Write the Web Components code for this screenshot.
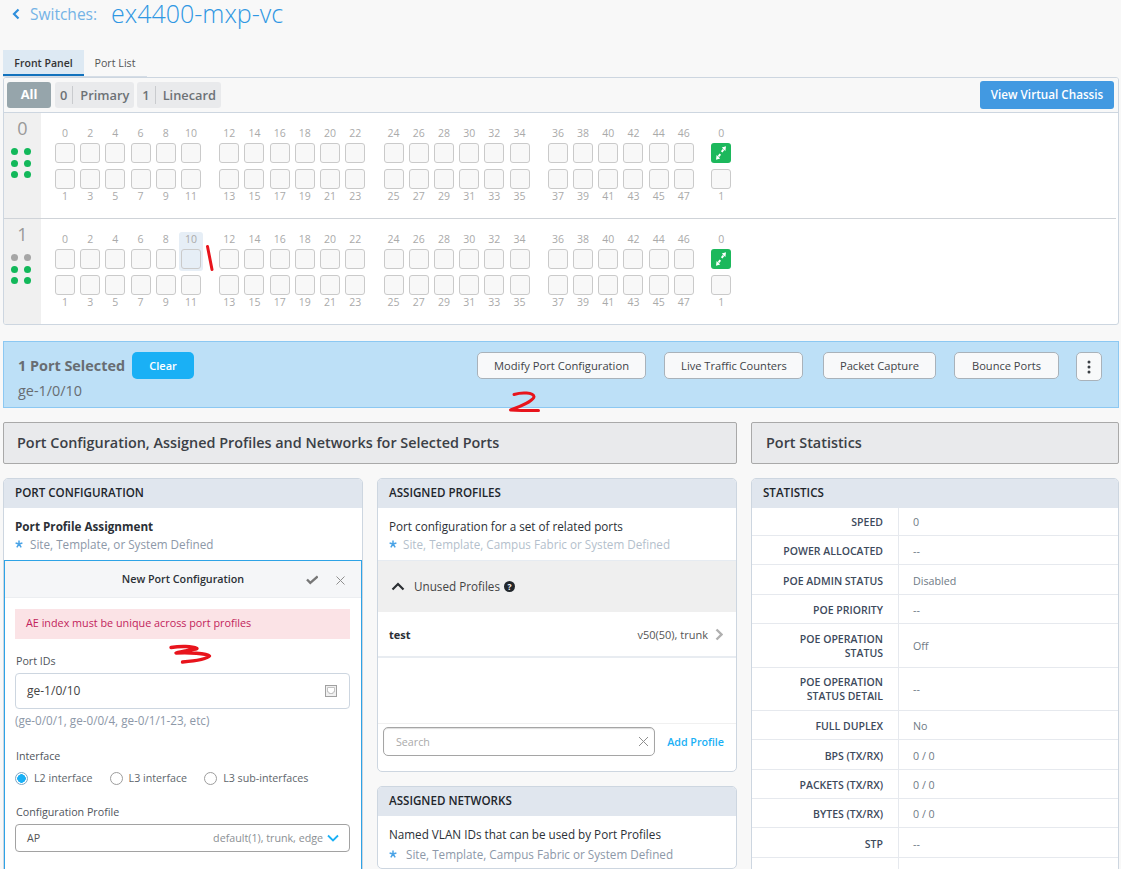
<!DOCTYPE html>
<html>
<head>
<meta charset="utf-8">
<title>ex4400-mxp-vc</title>
<style>
    html, body { margin: 0; padding: 0; background: #f8f8f8; }
    body { font-family: "Open Sans", "Liberation Sans", sans-serif; overflow: hidden; height: 869px; color: #333; }
</style>
</head>
<body>
<sw-page></sw-page>
<script>
class SwHeader extends HTMLElement {
    constructor() {
        super();
        this.attachShadow({mode: "open"}).innerHTML = `
        <style>
        :host { display: flex; align-items: center; height: 50px; padding: 0 0 24px 12px; box-sizing: border-box; color: #2f97e3; }
        svg { width: 8px; height: 12px; margin-right: 10px; margin-top: 2px; }
        .crumb { font-size: 15.5px; color: #74b3e6; margin-right: 14px; margin-top: 2px; }
        .name { font-size: 25px; font-weight: 300; line-height: 26px; }
        </style>
        <svg viewBox="0 0 8 12"><path d="M6.5 1.5 2 6l4.5 4.5" fill="none" stroke="#2f8fdc" stroke-width="2.2"/></svg>
        <span class="crumb">Switches:</span>
        <span class="name">ex4400-mxp-vc</span>`;
    }
}

class SwTabs extends HTMLElement {
    constructor() {
        super();
        this.attachShadow({mode: "open"}).innerHTML = `
        <style>
        :host { display: flex; margin-left: 3px; width: 144px; height: 27px; box-sizing: border-box; border-bottom: 1px solid #d5dde6; font-size: 10.5px; }
        div { height: 26px; line-height: 26px; text-align: center; box-sizing: border-box; }
        .on { width: 81px; background: #dde9f3; border-bottom: 2px solid #1272bd; color: #333; font-weight: 600; }
        .off { width: 63px; color: #555; font-size: 10.7px; padding-right: 1px; }
        </style>
        <div class="on">Front Panel</div>
        <div class="off">Port List</div>`;
    }
}

class SwToolbar extends HTMLElement {
    constructor() {
        super();
        this.attachShadow({mode: "open"}).innerHTML = `
        <style>
        :host { display: flex; align-items: center; height: 35px; box-sizing: border-box; border-bottom: 1px solid #cdd6e0; padding: 0 4px 0 3px; font-size: 12.8px; }
        .all { width: 44px; height: 26px; line-height: 25px; text-align: center; background: #96a5ab; color: #fff; font-weight: 700; border-radius: 3px; margin-right: 4px; }
        .seg { display: flex; align-items: center; height: 26px; box-sizing: border-box; padding-bottom: 1px; background: #e9eaec; border-radius: 3px; color: #6d7276; font-weight: 600; margin-right: 3px; }
        .seg b { font-weight: 600; padding: 0 5px 0 5px; border-right: 1px solid #c9cbce; line-height: 18px; margin-right: 7px; }
        .seg span { padding-right: 5px; }
        .view { margin-left: auto; width: 134px; height: 28px; line-height: 27px; text-align: center; background: #4299e1; color: #fff; font-weight: 600; font-size: 11.7px; border-radius: 3px; }
        </style>
        <div class="all">All</div>
        <div class="seg"><b>0</b><span>Primary</span></div>
        <div class="seg"><b>1</b><span>Linecard</span></div>
        <div class="view">View Virtual Chassis</div>`;
    }
}

class SwMember extends HTMLElement {
    constructor() {
        super();
        this.shadowDOM = this.attachShadow({mode: "open"});
    }

    connectedCallback() {
        this.render();
    }

    cell(n, top) {
        const selected = this.getAttribute("selected") === String(n) && top;
        const label = `<span class="num">${n}</span>`;
        const box = `<span class="port"></span>`;
        return `<div class="cell ${top ? "top" : "bottom"} ${selected ? "sel" : ""}">${top ? label + box : box + label}</div>`;
    }

    render() {
        const groups = [0, 12, 24, 36].map(start => {
            let cols = "";
            for (let i = 0; i < 12; i += 2) {
                cols += this.cell(start + i, true);
            }
            for (let i = 1; i < 12; i += 2) {
                cols += this.cell(start + i, false);
            }
            return `<div class="group">${cols}</div>`;
        }).join("");
        const grey = this.getAttribute("grey") === "1";
        const dots = [0, 0, 1, 1, 2, 2].map(r => `<i class="${grey && r === 0 ? "off" : ""}"></i>`).join("");
        this.shadowDOM.innerHTML = `
        <style>
        :host { display: flex; height: 106px; box-sizing: border-box; font-size: 10.5px; border-bottom: 1px solid #cfd3d8; margin-right: 2px; }
        :host([last]) { height: 105px; border-bottom: 0; }
        .side { width: 37px; background: #f0f0f0; text-align: center; flex: none; }
        .idx { font-size: 18px; color: #999; line-height: 24px; padding-top: 3px; }
        .dots { display: grid; grid-template-columns: 7px 7px; column-gap: 6.4px; row-gap: 4.7px; justify-content: center; margin: 8px 3px 0 0; }
        .dots i { width: 7px; height: 7px; border-radius: 50%; background: #12b85a; }
        .dots i.off { background: #a6a6a6; }
        .main { flex: 1; display: flex; padding: 14px 0 0 14px; }
        .group { display: grid; grid-template-columns: repeat(6, 20px); column-gap: 5.2px; row-gap: 6px; width: 146px; margin-right: 18.3px; align-content: start; }
        .group.extra { grid-template-columns: 20px; margin-left: -1px; }
        .cell { display: flex; flex-direction: column; align-items: center; color: #aaa; }
        .num { height: 12px; line-height: 12px; }
        .top .num { margin-bottom: 4px; }
        .bottom .num { margin-top: 1px; }
        .port { display: block; width: 20px; height: 20px; box-sizing: border-box; border: 1px solid #cacaca; border-radius: 3px; background: #f8f8f8; }
        .sel { background: #e6eef6; border-radius: 3px; margin: -1px -2px -2px; padding: 1px 2px 2px; }
        .sel .port { background: #e6eef6; }
        .port.up { background: #1cb85c; border: 0; }
        .up svg { display: block; width: 20px; height: 20px; }
        </style>
        <div class="side">
            <div class="idx">${this.getAttribute("index")}</div>
            <div class="dots">${dots}</div>
        </div>
        <div class="main">
            ${groups}
            <div class="group extra">
                <div class="cell top"><span class="num">0</span><span class="port up">
                    <svg viewBox="0 0 20 20"><path d="M12.5 6.5 10.7 8.9M7.5 13.5 9.3 11.1" stroke="#fff" stroke-width="2" fill="none"/><path d="M15 3.2 10.8 4.6 14.4 8ZM5 16.8 9.2 15.4 5.6 12Z" fill="#fff"/></svg>
                </span></div>
                <div class="cell bottom"><span class="port"></span><span class="num">1</span></div>
            </div>
        </div>`;
    }
}

class SwChassis extends HTMLElement {
    constructor() {
        super();
        this.attachShadow({mode: "open"}).innerHTML = `
        <style>
        :host { display: block; margin: 0 2px 0 3px; height: 248px; box-sizing: border-box; border: 1px solid #cdd6e0; border-radius: 3px; background: #fff; overflow: hidden; }
        sw-toolbar { background: #f8f8f8; }
        </style>
        <sw-toolbar></sw-toolbar>
        <sw-member index="0"></sw-member>
        <sw-member index="1" grey="1" selected="10" last></sw-member>`;
    }
}

class SwButton extends HTMLElement {
    constructor() {
        super();
        this.attachShadow({mode: "open"}).innerHTML = `
        <style>
        :host { display: block; box-sizing: border-box; height: 27px; line-height: 25px; text-align: center; background: #f8f9fa; border: 1px solid #a9b2ba; border-radius: 5px; font-size: 11.2px; color: #3f4448; }
        </style>
        <slot></slot>`;
    }
}

class SwSelectionBar extends HTMLElement {
    constructor() {
        super();
        this.attachShadow({mode: "open"}).innerHTML = `
        <style>
        :host { display: flex; margin: 16px 2px 0 3px; height: 67px; box-sizing: border-box; background: #bde0f7; border: 1px solid #8cc8f2; padding: 10px 0 0 14px; }
        .info { width: 459px; }
        .line { display: flex; align-items: center; height: 27px; }
        .count { font-size: 14.4px; font-weight: 700; color: #686d72; margin-right: 7px; }
        .clear { width: 62px; height: 27px; line-height: 27px; text-align: center; background: #1ab0f5; color: #fff; font-weight: 600; font-size: 11px; border-radius: 5px; }
        .ids { font-size: 14.4px; color: #686d72; margin-top: 2px; }
        sw-button.a { width: 169px; margin-right: 18px; }
        sw-button.b { width: 139px; margin-right: 20px; padding-left: 1px; font-size: 11.1px; }
        sw-button.c { width: 113px; margin-right: 18px; }
        sw-button.d { width: 105px; margin-right: 17px; font-size: 11.1px; }
        .more { width: 26px; height: 29px; box-sizing: border-box; background: #f8f9fa; border: 1px solid #a9b2ba; border-radius: 5px; display: flex; align-items: center; justify-content: center; }
        .more svg { width: 4px; height: 14px; }
        </style>
        <div class="info">
            <div class="line"><span class="count">1 Port Selected</span><span class="clear">Clear</span></div>
            <div class="ids">ge-1/0/10</div>
        </div>
        <sw-button class="a">Modify Port Configuration</sw-button>
        <sw-button class="b">Live Traffic Counters</sw-button>
        <sw-button class="c">Packet Capture</sw-button>
        <sw-button class="d">Bounce Ports</sw-button>
        <div class="more"><svg viewBox="0 0 4 14" fill="#3a3f44"><circle cx="2" cy="2" r="1.5"/><circle cx="2" cy="7" r="1.5"/><circle cx="2" cy="12" r="1.5"/></svg></div>`;
    }
}

class SwSectionHead extends HTMLElement {
    constructor() {
        super();
        this.attachShadow({mode: "open"}).innerHTML = `
        <style>
        :host { display: block; height: 42px; line-height: 40px; box-sizing: border-box; background: #e9eaec; border: 1px solid #a9a9a9; border-radius: 2px; padding-left: 13px; font-size: 14.4px; font-weight: 600; color: #3b4046; }
        :host([stat]) { padding-left: 14px; }
        </style>
        <slot></slot>`;
    }
}

class SwCard extends HTMLElement {
    constructor() {
        super();
        this.attachShadow({mode: "open"}).innerHTML = `
        <style>
        :host { display: block; box-sizing: border-box; border: 1px solid #cdd6e0; border-radius: 5px; background: #fff; overflow: hidden; }
        .head { height: 29px; line-height: 27px; background: #e0e6ee; padding-left: 11px; font-size: 11.6px; font-weight: 600; color: #20252b; }
        </style>
        <div class="head"><slot name="title"></slot></div>
        <slot></slot>`;
    }
}

class SwNote extends HTMLElement {
    constructor() {
        super();
        this.attachShadow({mode: "open"}).innerHTML = `
        <style>
        :host { display: block; box-sizing: border-box; height: 52px; padding: 9px 11px 0; font-size: 11.7px; color: #2b3036; }
        .main { line-height: 18px; }
        :host([strong]) .main { font-weight: 700; }
        .sub { line-height: 18px; color: #8d98a8; display: flex; align-items: center; }
        :host([pale]) .sub { color: #b4bfcc; }
        :host([wide]) .sub { margin-top: 2px; }
        svg { width: 8px; height: 8px; margin-right: 7px; flex: none; }
        :host([pale]) svg { margin-right: 6px; }
        :host([wide]) svg { margin-right: 9px; }
        </style>
        <div class="main"><slot></slot></div>
        <div class="sub"><svg viewBox="0 0 8 8" stroke="#4aa3e6" stroke-width="1.5" fill="none"><path d="M4 .6V4M.6 3l3.4 1M7.4 3 4 4M1.8 7.4 4 4M6.2 7.4 4 4"/></svg><slot name="sub"></slot></div>`;
    }
}

class SwPortForm extends HTMLElement {
    constructor() {
        super();
        this.attachShadow({mode: "open"}).innerHTML = `
        <style>
        :host { display: block; box-sizing: border-box; height: 320px; border: 1px solid #2ea3e6; border-bottom: 0; font-size: 11px; color: #444a50; }
        .top { height: 36px; display: flex; align-items: center; background: #f5f6f8; border-bottom: 1px solid #eceef1; position: relative; justify-content: flex-end; padding-right: 14px; gap: 16px; }
        .top b { position: absolute; left: 0; right: 0; text-align: center; font-weight: 600; font-size: 10.75px; color: #2b3036; }
        .top svg { position: relative; width: 13px; height: 13px; }
        .body { padding: 11px 11px 0 10px; background: #fff; height: 273px; }
        .alert { height: 30px; line-height: 28px; background: #fbe3e6; color: #c2245c; padding-left: 11px; margin-bottom: 15px; font-size: 10.8px; }
        .label { line-height: 14px; color: #4f555c; font-size: 10.7px; margin-left: 1px; }
        .field { display: flex; align-items: center; box-sizing: border-box; border-radius: 4px; background: #fff; padding: 0 12px 0 11px; }
        .ids { height: 36px; margin-top: 5px; border: 1px solid #cdd6e0; padding-bottom: 1px; font-size: 12px; color: #444; justify-content: space-between; }
        .ids svg { width: 12px; height: 12px; }
        .hint { color: #8d98a8; font-size: 11.7px; line-height: 16px; margin-top: 3px; margin-bottom: 21px; }
        .radios { display: flex; margin-top: 8px; margin-bottom: 20px; line-height: 14px; font-size: 10.7px; color: #60666c; }
        .radio { display: flex; align-items: center; margin-right: 17px; gap: 6px; }
        .radio i { display: block; box-sizing: border-box; width: 13px; height: 13px; border: 1px solid #9d9d9d; border-radius: 50%; background: #fff; }
        .radio i.on { border-color: #7ea7c4; background: radial-gradient(circle, #1ab0f5 0 4px, #fff 4.5px); }
        .profile { height: 28px; margin-top: 5px; border: 1px solid #a2a2a2; justify-content: space-between; padding-right: 10px; font-size: 10.7px; color: #555; }
        .profile span:last-child { display: flex; align-items: center; gap: 4px; color: #8b8f94; font-size: 10.7px; }
        .profile svg { width: 12px; height: 8px; }
        </style>
        <div class="top">
            <b>New Port Configuration</b>
            <svg viewBox="0 0 13 13" fill="none" stroke="#777" stroke-width="2.4"><path d="M2 6.5 5.3 9.8 12.7 3.5"/></svg>
            <svg viewBox="0 0 13 13" fill="none" stroke="#8f8f8f" stroke-width="1"><path d="M2.5 3.5l8 8M10.5 3.5l-8 8"/></svg>
        </div>
        <div class="body">
            <div class="alert">AE index must be unique across port profiles</div>
            <div class="label">Port IDs</div>
            <div class="field ids">ge-1/0/10
                <svg viewBox="0 0 12 12" fill="#f0f0f0" stroke="#a0a0a0"><rect x=".5" y=".5" width="11" height="11"/><path d="M2.5 2.5h7v4.5H8V8.5H4V7H2.5Z" fill="#fff" stroke="#c4c4c4"/></svg>
            </div>
            <div class="hint">(ge-0/0/1, ge-0/0/4, ge-0/1/1-23, etc)</div>
            <div class="label">Interface</div>
            <div class="radios">
                <div class="radio"><i class="on"></i>L2 interface</div>
                <div class="radio"><i></i>L3 interface</div>
                <div class="radio"><i></i>L3 sub-interfaces</div>
            </div>
            <div class="label">Configuration Profile</div>
            <div class="field profile"><span>AP</span><span>default(1), trunk, edge
                <svg viewBox="0 0 12 8" fill="none" stroke="#1ab0f5" stroke-width="1.8"><path d="M1 1.5 6 6.5l5-5"/></svg></span></div>
        </div>`;
    }
}

class SwProfiles extends HTMLElement {
    constructor() {
        super();
        this.attachShadow({mode: "open"}).innerHTML = `
        <style>
        :host { display: block; font-size: 11.7px; color: #2b3036; }
        .group { display: flex; align-items: center; height: 52px; background: #efefef; border-top: 1px solid #e6ebf1; padding: 0 0 1px 13px; box-sizing: border-box; }
        .group svg.up { width: 14px; height: 9px; margin-right: 9px; }
        .group span { color: #444; }
        .group svg.help { width: 11px; height: 11px; margin-left: 4px; }
        .row { display: flex; align-items: center; justify-content: space-between; height: 46px; box-sizing: border-box; border-bottom: 2px solid #e8ecf1; padding: 0 13px 0 11px; font-size: 11px; }
        .row b { font-weight: 700; }
        .row span { display: flex; align-items: center; gap: 7px; color: #555; }
        .row svg { width: 8px; height: 13px; }
        .empty { height: 65px; }
        .search { display: flex; align-items: center; height: 48px; box-sizing: border-box; border-top: 1px solid #f0f0f0; padding: 3px 12px 15px 5px; }
        .box { display: flex; align-items: center; justify-content: space-between; box-sizing: border-box; width: 272px; height: 29px; border: 1px solid #a5a5a5; border-radius: 5px; padding: 0 5px 0 12px; color: #aaa; font-size: 10.7px; box-shadow: inset 0 1px 1px #ddd; }
        .box svg { width: 11px; height: 11px; }
        .add { margin-left: auto; color: #1ab0f5; font-weight: 600; font-size: 10.7px; }
        </style>
        <div class="group">
            <svg class="up" viewBox="0 0 14 9" fill="none" stroke="#2b2f33" stroke-width="2.2"><path d="M1.5 7.5 7 2l5.5 5.5"/></svg>
            <span>Unused Profiles</span>
            <svg class="help" viewBox="0 0 11 11"><circle cx="5.5" cy="5.5" r="5.5" fill="#22272c"/><text x="5.5" y="8.6" text-anchor="middle" font-size="8.5" font-weight="700" fill="#fff" font-family="Open Sans">?</text></svg>
        </div>
        <div class="row"><b>test</b><span>v50(50), trunk
            <svg viewBox="0 0 8 13" fill="none" stroke="#b0b0b0" stroke-width="2.4"><path d="M1.5 1.5 6.5 6.5l-5 5"/></svg></span></div>
        <div class="empty"></div>
        <div class="search">
            <div class="box">Search<svg viewBox="0 0 11 11" fill="none" stroke="#8f8f8f"><path d="M1 1l9 9M10 1l-9 9"/></svg></div>
            <div class="add">Add Profile</div>
        </div>`;
    }
}

class SwStatRow extends HTMLElement {
    constructor() {
        super();
        this.attachShadow({mode: "open"}).innerHTML = `
        <style>
        :host { display: grid; grid-template-columns: 147px 1fr; box-sizing: border-box; border-bottom: 1px solid #e6e9ee; font-size: 10.5px; line-height: 14px; }
        .k { display: flex; align-items: center; justify-content: flex-end; text-align: right; padding-right: 15px; border-right: 1px solid #e6e9ee; color: #3d4a5c; font-weight: 600; }
        .v { display: flex; align-items: center; padding-left: 14px; color: #6f7a85; font-size: 10.7px; }
        :host([nudge]) .k, :host([nudge]) .v { padding-top: 2px; }
        </style>
        <div class="k"><span><slot name="k"></slot></span></div>
        <div class="v"><slot></slot></div>`;
    }
}

class SwStats extends HTMLElement {
    constructor() {
        super();
        const rows = [
            ["SPEED", "0", 28], ["POWER ALLOCATED", "--", 29, 1], ["POE ADMIN STATUS", "Disabled", 30, 1],
            ["POE PRIORITY", "--", 29, 1], ["POE OPERATION<br>STATUS", "Off", 44],
            ["POE OPERATION<br>STATUS DETAIL", "--", 43], ["FULL DUPLEX", "No", 29, 1],
            ["BPS (TX/RX)", "0 / 0", 30, 1], ["PACKETS (TX/RX)", "0 / 0", 29, 1],
            ["BYTES (TX/RX)", "0 / 0", 29, 1], ["STP", "--", 30, 1], ["&nbsp;", "", 30]
        ];
        this.attachShadow({mode: "open"}).innerHTML = `
        <style>:host { display: block; }</style>
        ${rows.map(r => `<sw-stat-row ${r[3] ? "nudge" : ""} style="height:${r[2]}px"><span slot="k">${r[0]}</span>${r[1]}</sw-stat-row>`).join("")}`;
    }
}

class SwPage extends HTMLElement {
    constructor() {
        super();
        this.attachShadow({mode: "open"}).innerHTML = `
        <style>
        :host { display: block; position: relative; height: 869px; overflow: hidden; }
        .heads { display: grid; grid-template-columns: 734px 368px; column-gap: 14px; margin: 14px 2px 0 3px; }
        .cols { display: grid; grid-template-columns: 360px 360px 368px; column-gap: 14px; margin: 14px 2px 0 3px; align-items: start; }
        .stack { display: flex; flex-direction: column; gap: 14px; }
        .tall { height: 420px; }
        .ink { position: absolute; left: 0; top: 0; width: 1121px; height: 869px; pointer-events: none; }
        </style>
        <sw-header></sw-header>
        <sw-tabs></sw-tabs>
        <sw-chassis></sw-chassis>
        <sw-selection-bar></sw-selection-bar>
        <div class="heads">
            <sw-section-head>Port Configuration, Assigned Profiles and Networks for Selected Ports</sw-section-head>
            <sw-section-head stat>Port Statistics</sw-section-head>
        </div>
        <div class="cols">
            <sw-card class="tall">
                <span slot="title">PORT CONFIGURATION</span>
                <sw-note strong>Port Profile Assignment<span slot="sub">Site, Template, or System Defined</span></sw-note>
                <sw-port-form></sw-port-form>
            </sw-card>
            <div class="stack">
                <sw-card>
                    <span slot="title">ASSIGNED PROFILES</span>
                    <sw-note pale>Port configuration for a set of related ports<span slot="sub">Site, Template, Campus Fabric or System Defined</span></sw-note>
                    <sw-profiles></sw-profiles>
                </sw-card>
                <sw-card>
                    <span slot="title">ASSIGNED NETWORKS</span>
                    <sw-note wide>Named VLAN IDs that can be used by Port Profiles<span slot="sub">Site, Template, Campus Fabric or System Defined</span></sw-note>
                </sw-card>
            </div>
            <sw-card class="tall">
                <span slot="title">STATISTICS</span>
                <sw-stats></sw-stats>
            </sw-card>
        </div>
        <svg class="ink" viewBox="0 0 1121 869" fill="none" stroke="#e8141c" stroke-linecap="round" stroke-linejoin="round">
            <path d="M207.5 246.5 212 269.5" stroke-width="3"/>
            <path d="M514 394.5C522 392 533 392.5 534 396.5 534 400 522 406 510.5 410 519 410.5 530 410.5 538.5 410.5" stroke-width="3"/>
            <path d="M171 647.5C180 646 192 646 197 648.5 192 650 182 651 176 653 188 652.5 207 653 209.5 656 207 659 194 661 182.5 662" stroke-width="3.4"/>
        </svg>`;
    }
}

customElements.define("sw-header", SwHeader);
customElements.define("sw-tabs", SwTabs);
customElements.define("sw-toolbar", SwToolbar);
customElements.define("sw-member", SwMember);
customElements.define("sw-chassis", SwChassis);
customElements.define("sw-button", SwButton);
customElements.define("sw-selection-bar", SwSelectionBar);
customElements.define("sw-section-head", SwSectionHead);
customElements.define("sw-card", SwCard);
customElements.define("sw-note", SwNote);
customElements.define("sw-port-form", SwPortForm);
customElements.define("sw-profiles", SwProfiles);
customElements.define("sw-stat-row", SwStatRow);
customElements.define("sw-stats", SwStats);
customElements.define("sw-page", SwPage);
</script>
</body>
</html>
